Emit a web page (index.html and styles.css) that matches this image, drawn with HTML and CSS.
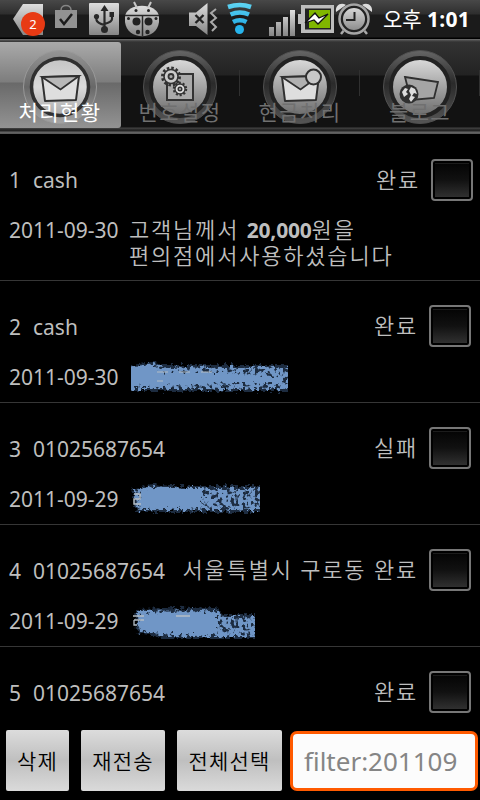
FILE: index.html
```
<!DOCTYPE html>
<html lang="ko">
<head>
    <meta charset="UTF-8">
    <meta name="viewport" content="width=device-width, initial-scale=1.0">
    <title>처리현황</title>
    <link rel="stylesheet" href="styles.css">
</head>
<body>
    <svg class="defs" width="0" height="0">
        <defs>
            <linearGradient id="silver" x1="0" y1="0" x2="0" y2="1">
                <stop offset="0" stop-color="#dedede"/>
                <stop offset="1" stop-color="#858585"/>
            </linearGradient>
            <linearGradient id="ring" x1="0" y1="0" x2="0" y2="1">
                <stop offset="0" stop-color="#666"/>
                <stop offset=".45" stop-color="#2a2a2a"/>
                <stop offset="1" stop-color="#555"/>
            </linearGradient>
            <linearGradient id="ring-on" x1="0" y1="0" x2="0" y2="1">
                <stop offset="0" stop-color="#959595"/>
                <stop offset=".5" stop-color="#686868"/>
                <stop offset="1" stop-color="#a5a5a5"/>
            </linearGradient>
            <linearGradient id="disc" x1="0" y1="0" x2="0" y2="1">
                <stop offset="0" stop-color="#dcdcdc"/>
                <stop offset="1" stop-color="#6c6c6c"/>
            </linearGradient>
            <linearGradient id="disc-on" x1="0" y1="0" x2="0" y2="1">
                <stop offset="0" stop-color="#c4c4c4"/>
                <stop offset=".5" stop-color="#dadada"/>
                <stop offset="1" stop-color="#aaa"/>
            </linearGradient>
            <linearGradient id="wifi" gradientUnits="userSpaceOnUse" x1="0" y1="3" x2="0" y2="34">
                <stop offset="0" stop-color="#5fd4f2"/>
                <stop offset="1" stop-color="#139fe0"/>
            </linearGradient>
            <!-- crayon texture for the masked message text -->
            <filter id="crayon" x="-5%" y="-20%" width="110%" height="140%" color-interpolation-filters="sRGB">
                <feTurbulence type="fractalNoise" baseFrequency=".25" numOctaves="2" seed="4" result="n"/>
                <feDisplacementMap in="SourceGraphic" in2="n" scale="9" xChannelSelector="R" yChannelSelector="G" result="d"/>
                <feColorMatrix in="n" type="matrix" values="0 0 0 0 0  0 0 0 0 0  0 0 0 0 0  0 0 8 0 -3" result="m"/>
                <feComposite in="d" in2="m" operator="in"/>
                <feGaussianBlur stdDeviation=".4"/>
            </filter>
            <filter id="crayon-edge" x="-5%" y="-20%" width="110%" height="140%" color-interpolation-filters="sRGB">
                <feTurbulence type="fractalNoise" baseFrequency=".28" numOctaves="2" seed="9" result="n"/>
                <feDisplacementMap in="SourceGraphic" in2="n" scale="9" xChannelSelector="R" yChannelSelector="G"/>
                <feGaussianBlur stdDeviation=".5"/>
            </filter>
        </defs>
    </svg>

    <div class="status-bar">
        <svg class="status-icons" width="378" height="38" viewBox="0 0 378 38">
            <path d="M13 19L23 4H43V35H23Z" fill="url(#silver)"/>
            <circle cx="33" cy="24" r="12" fill="#e83a14"/>
            <text x="33" y="29" class="badge">2</text>
            <path d="M55 10H77V28H55Z" fill="#929292"/>
            <path d="M61 10C61 4 71 4 71 10" fill="none" stroke="#858585" stroke-width="1.5"/>
            <path d="M60 19L64 24L72 14" fill="none" stroke="#1c1c1c" stroke-width="2.5"/>
            <rect x="89" y="3" width="30" height="32" rx="1" fill="url(#silver)"/>
            <g fill="none" stroke="#282828" stroke-width="2.2">
                <path d="M104.500 9V30M96.500 17V20Q97 23 104.500 25M112 15V19Q112 22 104.500 24"/>
            </g>
            <path d="M100.500 11L104.500 5L108.500 11ZM109.500 12H114V17H109.500Z" fill="#282828"/>
            <circle cx="96.500" cy="16.500" r="2.600" fill="#282828"/>
            <circle cx="104.500" cy="29.500" r="3.500" fill="#282828"/>
            <path d="M125 22V17C126 2 158 2 159 17V22C157 41 127 41 125 22Z" fill="url(#silver)"/>
            <path d="M137 8L134 2M148 8L151 2" stroke="#c8c8c8" stroke-width="2"/>
            <path d="M125 15.500H159M142.500 15V36" stroke="#282828" stroke-width="1.500"/>
            <g fill="#222">
                <circle cx="136.500" cy="21.500" r="4"/><circle cx="148.500" cy="21.500" r="4"/>
                <circle cx="138" cy="32" r="2.200"/><circle cx="147.500" cy="32" r="2.200"/>
                <circle cx="128.500" cy="18.500" r="1.500"/><circle cx="156" cy="18.500" r="1.500"/>
                <circle cx="136" cy="10.500" r="1.500"/><circle cx="148.500" cy="10.500" r="1.500"/>
            </g>
            <path d="M189 12.500H196L207.500 3V35L196 26H189Z" fill="url(#silver)"/>
            <path d="M195.500 15L203.500 23M203.500 15L195.500 23" stroke="#222" stroke-width="2.400"/>
            <path d="M216 9L211 13L216 18L211 22L216 27L212 31" fill="none" stroke="#aaa" stroke-width="2"/>
            <g fill="none" stroke="url(#wifi)" stroke-width="4.600">
                <path d="M228 7Q240 3 251 7"/>
                <path d="M230.500 14.500Q240 10.500 249 14.500"/>
                <path d="M233 22Q240 18.500 246.500 22"/>
            </g>
            <circle cx="239.500" cy="29.500" r="4.500" fill="#27b4ec"/>
            <path d="M269 27H274V36H269ZM276 22H281V36H276ZM283 17H288V36H283ZM290 10H295V36H290Z" fill="url(#silver)"/>
            <path d="M301 5H334V33H301V24H298V14H301Z" fill="#bdbdbd"/>
            <rect x="305" y="8.500" width="26" height="21" fill="#222"/>
            <rect x="309" y="10" width="21" height="18" fill="#80b600"/>
            <path d="M305 23L315 13L319 18L328 14L318 24L314 20Z" fill="#fff" stroke="#111" stroke-width="1.300"/>
            <path d="M336 12C335 5 341 2 346 5ZM372 12C373 5 367 2 362 5Z" fill="#ddd"/>
            <path d="M345 29L341 34M363 29L367 34" stroke="#aaa" stroke-width="2.500"/>
            <circle cx="354" cy="19" r="13.500" fill="url(#silver)" stroke="#222" stroke-width="5"/>
            <circle cx="354" cy="19" r="14.500" fill="none" stroke="#a6a6a6" stroke-width="2.500"/>
            <path d="M354.500 12V20H346" fill="none" stroke="#222" stroke-width="2"/>
        </svg>
        <span class="clock">오후 <b>1:01</b></span>
    </div>

    <div class="tabs">
        <div class="tab active">
            <svg class="tab-icon" width="76" height="76" viewBox="0 0 76 76">
                <circle cx="38" cy="38" r="36.500" fill="url(#ring-on)" stroke="#999"/>
                <circle cx="38" cy="38" r="28.500" fill="url(#disc-on)" stroke="#303030" stroke-width="3.500"/>
                <path d="M20 28L57 27L54 51L23 52Z" fill="#dedede" stroke="#303030" stroke-width="2" stroke-linejoin="round"/>
                <path d="M20 28L38.500 40.500L57 27Z" fill="#b8b8b8" stroke="#303030" stroke-width="1.800"/>
            </svg>
            <span class="tab-label">처리현황</span>
        </div>
        <div class="tab">
            <svg class="tab-icon" width="76" height="76" viewBox="0 0 76 76">
                <circle cx="38" cy="38" r="36.500" fill="url(#ring)" stroke="#505050"/>
                <circle cx="38" cy="38" r="29" fill="url(#disc)" stroke="#222" stroke-width="4"/>
                <rect x="25" y="25" width="26" height="26" fill="#aaa" stroke="#333" stroke-width="2"/>
                <circle cx="29" cy="27.500" r="8.500" fill="none" stroke="#333" stroke-width="3" stroke-dasharray="2.500 1.950"/>
                <circle cx="29" cy="27.500" r="7" fill="#ccc" stroke="#333" stroke-width="1.600"/>
                <circle cx="29" cy="27.500" r="2.500" fill="#aaa" stroke="#333" stroke-width="1.800"/>
                <circle cx="38" cy="40" r="6" fill="none" stroke="#333" stroke-width="2.500" stroke-dasharray="2 1.770"/>
                <circle cx="38" cy="40" r="5" fill="#ddd" stroke="#333" stroke-width="1.300"/>
                <circle cx="38" cy="40" r="1.800" fill="#aaa" stroke="#333" stroke-width="1.400"/>
            </svg>
            <span class="tab-label">번호설정</span>
        </div>
        <div class="tab">
            <svg class="tab-icon" width="76" height="76" viewBox="0 0 76 76">
                <circle cx="38" cy="38" r="36.500" fill="url(#ring)" stroke="#505050"/>
                <circle cx="38" cy="38" r="29" fill="url(#disc)" stroke="#222" stroke-width="4"/>
                <path d="M20 28L57 27L54 51L23 52Z" fill="#dedede" stroke="#303030" stroke-width="2" stroke-linejoin="round"/>
                <path d="M20 28L38.500 40.500L57 27Z" fill="#b0b0b0" stroke="#303030" stroke-width="1.800"/>
                <circle cx="51.500" cy="28" r="7.500" fill="#c8c8c8" stroke="#303030" stroke-width="2"/>
            </svg>
            <span class="tab-label">현금처리</span>
        </div>
        <div class="tab">
            <svg class="tab-icon" width="76" height="76" viewBox="0 0 76 76">
                <circle cx="38" cy="38" r="36.500" fill="url(#ring)" stroke="#505050"/>
                <circle cx="38" cy="38" r="29" fill="url(#disc)" stroke="#222" stroke-width="4"/>
                <path d="M23 28L56 33L52 49L29 51Z" fill="#a5a5a5" stroke="#303030" stroke-width="1.800"/>
                <circle cx="27" cy="45" r="9.500" fill="#303030"/>
                <path d="M20 43L23 39L26 40L24 43L26 45L22 48ZM29 38L33 40L35 45L32 44L30 47L33 48L29 53L27 50L29 46L27 42Z" fill="#ddd"/>
            </svg>
            <span class="tab-label">블로그</span>
        </div>
    </div>

    <div class="list">
        <div class="row first">
            <div class="row-head">
                <span class="no">1</span><span class="name">cash</span>
                <span class="state">완료</span><span class="check"></span>
            </div>
            <div class="row-body">
                <span class="date">2011-09-30</span>
                <p class="message">고객님께서 <b>20,000</b>원을<br>편의점에서사용하셨습니다</p>
            </div>
        </div>
        <div class="row">
            <div class="row-head">
                <span class="no">2</span><span class="name">cash</span>
                <span class="state">완료</span><span class="check"></span>
            </div>
            <div class="row-body">
                <span class="date">2011-09-30</span>
                <svg class="scribble" width="157" height="34" viewBox="0 0 157 34">
                    <path d="M-6 5L22 1L36 4H169V30H-6Z" fill="#1d2c40" filter="url(#crayon-edge)"/>
                    <path d="M-6 6L22 3L36 6H169V28H-6Z" fill="#7096c6" filter="url(#crayon)"/>
                    <path d="M-6 7L22 4L32 12H100L150 17V22H100L32 25H-6Z" fill="#7096c6" filter="url(#crayon-edge)"/>
                    <path d="M26 11H37M26 20H32M48 11H59M70 11H81" stroke="#b4bdc5" stroke-width="1" fill="none"/>
                </svg>
            </div>
        </div>
        <div class="row">
            <div class="row-head">
                <span class="no">3</span><span class="name">01025687654</span>
                <span class="state">실패</span><span class="check"></span>
            </div>
            <div class="row-body">
                <span class="date">2011-09-29</span>
                <svg class="scribble" width="129" height="34" viewBox="0 0 129 34">
                    <path d="M1 6L22 1L38 3H141V29H5Z" fill="#1d2c40" filter="url(#crayon-edge)"/>
                    <path d="M3 7L22 4L38 5H141V27H6Z" fill="#7096c6" filter="url(#crayon)"/>
                    <path d="M10 8L22 5H70V25H8Z" fill="#7096c6" filter="url(#crayon-edge)"/>
                    <path d="M3 11H9V16H3V21H10" stroke="#b4bdc5" stroke-width="1.500" fill="none"/>
                </svg>
            </div>
        </div>
        <div class="row">
            <div class="row-head">
                <span class="no">4</span><span class="name">01025687654</span>
                <span class="state">서울특별시 구로동 완료</span><span class="check"></span>
            </div>
            <div class="row-body">
                <span class="date">2011-09-29</span>
                <svg class="scribble" width="124" height="34" viewBox="0 0 124 34">
                    <path d="M5 4L85 2L92 9H136V34H40L6 28Z" fill="#1d2c40" filter="url(#crayon-edge)"/>
                    <path d="M6 6L86 5L92 12H136V32H40L8 26Z" fill="#7096c6" filter="url(#crayon)"/>
                    <path d="M7 8L87 7V29H40L8 25Z" fill="#7096c6" filter="url(#crayon-edge)"/>
                    <path d="M2 11H13M3 15H13M3 15V20H6M45 11H59" stroke="#b4bdc5" stroke-width="1.300" fill="none"/>
                </svg>
            </div>
        </div>
        <div class="row">
            <div class="row-head">
                <span class="no">5</span><span class="name">01025687654</span>
                <span class="state">완료</span><span class="check"></span>
            </div>
        </div>
    </div>

    <div class="bottom-bar">
        <button class="btn btn-delete">삭제</button>
        <button class="btn btn-resend">재전송</button>
        <button class="btn btn-all">전체선택</button>
        <input class="filter" type="text" placeholder="filter:201109">
    </div>
</body>
</html>
```

FILE: styles.css
```
* {
    box-sizing: border-box;
}
body {
    margin: 0;
    width: 480px;
    height: 800px;
    overflow: hidden;
    display: flex;
    flex-direction: column;
    background: #000;
    color: #bebebe;
    font-family: "Noto Sans", "Noto Sans CJK KR", sans-serif;
    font-size: 21px;
}
.defs {
    position: absolute;
}

/* status bar */
.status-bar {
    flex: none;
    height: 40px;
    display: flex;
    background: linear-gradient(#484848 0, #2e2e2e 14px, #1b1b1b 15px, #1b1b1b 37px, #000 38px, #000 39px, #666 39px);
}
.status-icons {
    flex: none;
}
.badge {
    fill: #fff;
    font-size: 13px;
    text-anchor: middle;
}
.clock {
    padding-left: 5px;
    line-height: 38px;
    font-size: 21px;
    color: #fff;
    white-space: nowrap;
}
.clock b {
    letter-spacing: 0.2px;
}

/* tabs */
.tabs {
    flex: none;
    height: 94px;
    display: flex;
    background: linear-gradient(#555 0, #333 2px, #222 35px, #121212 36px, #121212 87px, #444 88px, #222 90px, #222 91px, #666 92px, #555 94px);
}
.tab {
    width: 120px;
    height: 88px;
    padding-top: 9px;
    display: flex;
    flex-direction: column;
    align-items: center;
    background: linear-gradient(#303030, #303030) right 30px / 1px 26px no-repeat;
}
.tab.active {
    width: 121px;
    margin: 2px -1px 0 0;
    padding-top: 7px;
    padding-right: 1px;
    height: 86px;
    border-radius: 0 3px 3px 0;
    background: linear-gradient(#aaa 0, #7d7d7d 40px, #696969 41px, #939393 100%);
}
.tab-icon {
    flex: none;
}
.tab-label {
    margin-top: -28px;
    line-height: 30px;
    color: #707070;
    font-size: 21px;
    letter-spacing: 1.4px;
    white-space: nowrap;
}
.tab.active .tab-label {
    color: #fff;
}

/* list */
.list {
    flex: none;
    height: 590px;
    overflow: hidden;
}
.row {
    height: 122px;
    padding: 20px 9px 0;
    border-bottom: 1px solid #363636;
}
.row.first {
    height: 147px;
    padding: 21px 7px 0 9px;
}
.row-head {
    height: 50px;
    display: flex;
    align-items: center;
}
.no {
    width: 24px;
}
.name {
    flex: 1;
}
.row:not(.first) .no,
.row:not(.first) .name {
    padding-top: 2px;
}
.state {
    margin-top: -2px;
    font-size: 22px;
    letter-spacing: 1.8px;
    font-weight: 350;
    line-height: 30px;
}
.check {
    width: 42px;
    height: 42px;
    margin-left: 11px;
    padding: 2px;
    border: 2px solid #777;
    border-radius: 4px;
    background: linear-gradient(#333 0, #050505 1px, #111 50%, #303030 100%) content-box, #000;
}
.row-body {
    display: flex;
    line-height: 50px;
}
.row:not(.first) .row-body {
    padding-top: 1px;
}
.date {
    width: 120px;
}
.message {
    margin: 12px 0 0;
    font-size: 22px;
    line-height: 25px;
    letter-spacing: 1.8px;
    font-weight: 350;
}
.message b {
    font-size: 21px;
    font-weight: 700;
    letter-spacing: -0.2px;
}
.scribble {
    margin: 9px 0 0 2px;
}

/* bottom bar */
.bottom-bar {
    flex: none;
    height: 76px;
    padding: 6px 2px 9px 6px;
    display: flex;
}
.btn {
    flex: none;
    height: 61px;
    margin: 0 12px 0 0;
    padding: 0 0 2px;
    border: none;
    border-radius: 2px;
    background: linear-gradient(#dcdcdc, #bfbfbf 50%, #dadada);
    color: #000;
    font-family: inherit;
    font-size: 21px;
    font-weight: 350;
    letter-spacing: 1.2px;
}
.btn-delete {
    width: 63px;
}
.btn-resend {
    width: 84px;
}
.btn-all {
    width: 105px;
    margin-right: 8px;
}
.filter {
    width: 188px;
    height: 60px;
    margin-top: 1px;
    padding: 0 11px;
    border: 3px solid #ff5a00;
    border-radius: 7px;
    background: #fcfcfc;
    font-family: inherit;
    font-size: 26px;
}
.filter::placeholder {
    color: #858585;
}
```
